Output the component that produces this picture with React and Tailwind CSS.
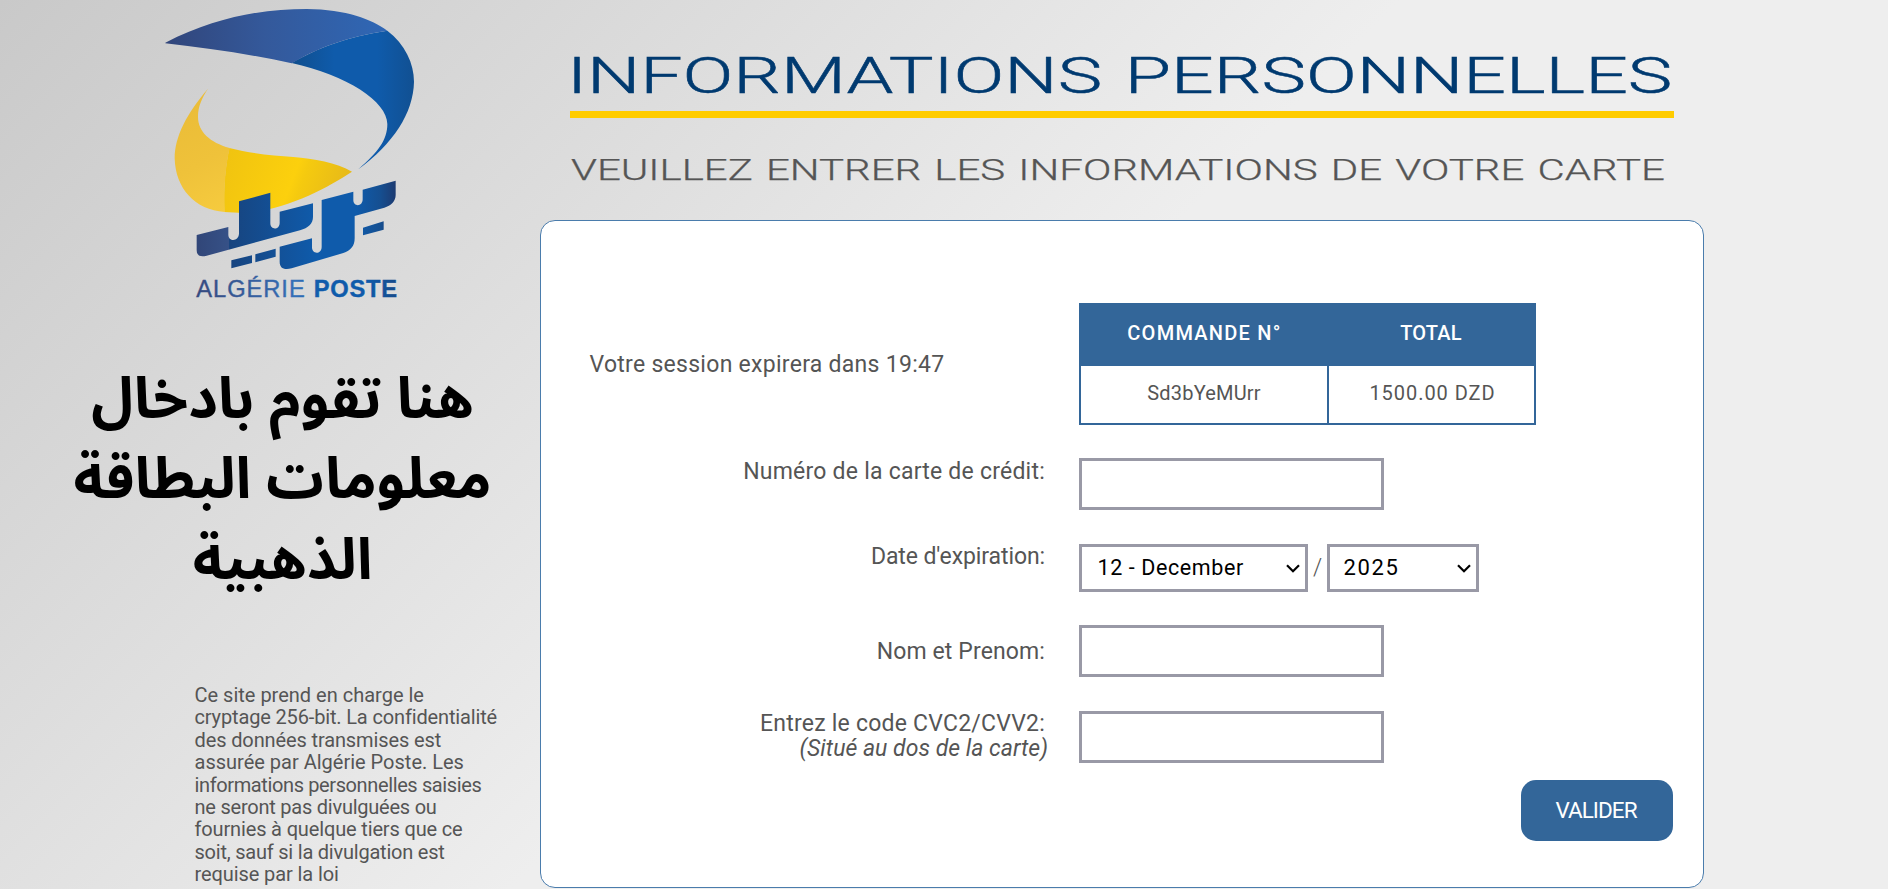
import React from 'react';

function Logo() {
  return (
    <svg className="block h-[310px] w-[300px]" viewBox="0 0 900 930" role="img" aria-label="Algérie Poste">
      <defs>
        <linearGradient id="swoopDull" gradientUnits="userSpaceOnUse" x1="76" y1="0" x2="742" y2="0">
          <stop offset="0" stopColor="#31457a" />
          <stop offset="0.45" stopColor="#34599b" />
          <stop offset="1" stopColor="#2f67b5" />
        </linearGradient>
        <linearGradient id="swoopBright" gradientUnits="userSpaceOnUse" x1="455" y1="0" x2="822" y2="0">
          <stop offset="0" stopColor="#104e8d" />
          <stop offset="0.35" stopColor="#0f5bab" />
          <stop offset="0.7" stopColor="#0f5bab" />
          <stop offset="1" stopColor="#115092" />
        </linearGradient>
        <linearGradient id="goldMain" gradientUnits="userSpaceOnUse" x1="250" y1="470" x2="590" y2="600">
          <stop offset="0" stopColor="#f0c310" />
          <stop offset="0.6" stopColor="#fcd00d" />
          <stop offset="0.68" stopColor="#f5ca0f" />
          <stop offset="1" stopColor="#e8bb18" />
        </linearGradient>
        <linearGradient id="goldSide" gradientUnits="userSpaceOnUse" x1="110" y1="350" x2="260" y2="630">
          <stop offset="0" stopColor="#ebbd38" />
          <stop offset="0.5" stopColor="#efc23a" />
          <stop offset="1" stopColor="#f6cb3e" />
        </linearGradient>
        <linearGradient id="word" gradientUnits="userSpaceOnUse" x1="170" y1="0" x2="768" y2="0">
          <stop offset="0" stopColor="#314678" />
          <stop offset="0.16" stopColor="#365187" />
          <stop offset="0.165" stopColor="#17447f" />
          <stop offset="0.6" stopColor="#0f5bab" />
          <stop offset="0.8" stopColor="#0f5bab" />
          <stop offset="0.92" stopColor="#154f91" />
          <stop offset="1" stopColor="#1d3a70" />
        </linearGradient>
        <linearGradient id="name" gradientUnits="userSpaceOnUse" x1="170" y1="0" x2="768" y2="0">
          <stop offset="0" stopColor="#354a7f" />
          <stop offset="0.5" stopColor="#3470b8" />
          <stop offset="0.62" stopColor="#0f5bab" />
          <stop offset="0.85" stopColor="#0f5bab" />
          <stop offset="1" stopColor="#164c8c" />
        </linearGradient>
      </defs>
      <path fill="url(#swoopBright)" d="M455 189C530 145 620 110 742 92C795 132 822 190 822 245C820 340 760 430 655 508C715 455 742 420 742 372C742 305 620 225 455 189Z" />
      <path fill="url(#swoopDull)" d="M76 128C230 50 370 27 500 27C620 28 695 58 742 92C620 110 530 145 455 190C330 162 200 145 76 130Z" />
      <path fill="url(#goldMain)" d="M253 636C250 560 256 500 268 444C330 460 400 467 460 471C520 476 590 488 636 515C560 565 420 640 296 638Z" />
      <path fill="url(#goldSide)" d="M204 266C140 340 104 410 104 475C106 565 165 630 254 636C251 560 257 500 269 444C210 427 174 395 174 350C174 320 185 295 204 266Z" />
      <g fill="url(#word)">
        <path d="M170 705L265 681V704C265 726 297 726 297 700V604L391 578V670C391 691 419 691 419 668V635L519 610V650C519 672 505 683 480 691L200 767C178 772 170 765 170 750Z" />
        <path d="M274 781L336 766V789L274 805ZM346 763L407 746V770L346 787ZM669 683L731 664V689L669 706Z" />
        <path d="M419 740L516 715V742C516 764 545 764 545 740V600L640 575V600C640 621 668 621 668 598V569L767 542V585C767 604 753 617 733 623L644 648V715C644 738 632 752 610 759L455 805C430 811 419 803 419 785Z" />
      </g>
      <g fill="url(#name)" stroke="url(#name)" strokeWidth="1.2" fontFamily="'Liberation Sans', sans-serif" fontSize="71">
        <text x="169" y="892" textLength="325">ALGÉRIE</text>
        <text x="521" y="892" fontWeight="700" textLength="250">POSTE</text>
      </g>
    </svg>
  );
}

function Chevron() {
  return (
    <svg className="pointer-events-none absolute top-[20px] right-[8px] h-[9px] w-[14px]" viewBox="0 0 14 9" fill="none" stroke="#000" strokeWidth="2.2">
      <path d="M1 1.2L7 7.2L13 1.2" />
    </svg>
  );
}

function Select({ box, text, value }) {
  return (
    <div className={'relative h-12 ' + box}>
      <select
        className={'h-full w-full appearance-none border-[3px] border-[#9999a6] bg-white p-0 text-black ' + text}
        defaultValue={value}
      >
        <option>{value}</option>
      </select>
      <Chevron />
    </div>
  );
}

function Field({ height, center, input, children }) {
  return (
    <div className={'flex gap-[34px] ' + height}>
      <div className={'w-[504px] text-right whitespace-nowrap ' + (center ? 'self-center' : 'pt-[0.5px]')}>{children}</div>
      {input}
    </div>
  );
}

const TextInput = ({ label }) => (
  <input aria-label={label} className="h-[52px] w-[305px] border-[3px] border-[#9999a6] bg-white" />
);

export default function App() {
  return (
    <div className="flex h-[889px] w-full overflow-hidden bg-[linear-gradient(135deg,#c9c9c9_0,#eeeeee_990px)] font-['Roboto','Liberation_Sans',sans-serif] text-[#555555]">
      <aside className="w-[540px] shrink-0">
        <div className="pl-[140px]">
          <Logo />
        </div>
        <h2 dir="rtl" className="mt-[50px] ml-[57.5px] h-[242px] w-[450px] text-center font-['Noto_Sans_Arabic','Noto_Sans',sans-serif] text-[57.4px] leading-[80.4px] font-bold whitespace-nowrap text-black">
          هنا تقوم بادخال
          <br />
          معلومات البطاقة
          <br />
          الذهبية
        </h2>
        <p className="mt-[82px] ml-[194.5px] text-[20px] leading-[22.4px] whitespace-nowrap">
          <span className="block">Ce site prend en charge le</span>
          <span className="block tracking-[-0.15px]">cryptage 256-bit. La confidentialité</span>
          <span className="block tracking-[-0.12px]">des données transmises est</span>
          <span className="block">assurée par Algérie Poste. Les</span>
          <span className="block tracking-[-0.38px]">informations personnelles saisies</span>
          <span className="block tracking-[-0.23px]">ne seront pas divulguées ou</span>
          <span className="block tracking-[-0.15px]">fournies à quelque tiers que ce</span>
          <span className="block tracking-[-0.22px]">soit, sauf si la divulgation est</span>
          <span className="block tracking-[-0.1px]">requise par la loi</span>
        </p>
      </aside>

      <main className="w-[1164px] shrink-0">
        <header className="mx-[30px] h-[220px] whitespace-nowrap">
          <h1 className="h-[117.5px] border-b-[7px] border-[#ffcc00] pt-[46px] text-[50.6px] leading-[60px] font-light text-[#003a70] [-webkit-text-stroke:0.5px_#003a70]">
            <span className="-ml-[3px] inline-block origin-left scale-x-[1.483] [word-spacing:3px]">INFORMATIONS PERSONNELLES</span>
          </h1>
          <p className="pt-[34px] text-[28.8px] leading-[36px] font-light [-webkit-text-stroke:0.25px_#555555]">
            <span className="ml-[1px] inline-block origin-left scale-x-[1.457] [word-spacing:2px]">VEUILLEZ ENTRER LES INFORMATIONS DE VOTRE CARTE</span>
          </p>
        </header>

        <section className="h-[668px] rounded-[15px] border border-[#4a7cac] bg-white text-[23px] leading-[25px]">
          <div className="mt-[82px] flex h-[121.5px] items-center">
            <p className="w-[538px] pt-[2px] pl-[48.5px] tracking-[0.28px]">Votre session expirera dans 19:47</p>
            <table className="h-[121.5px] w-[457px] table-fixed border-collapse border-2 border-[#336699] text-center text-[20px]">
              <thead>
                <tr className="h-[61px] bg-[#336699] text-white">
                  <th className="w-[248px] pb-[2px] font-medium tracking-[1.25px]">COMMANDE N°</th>
                  <th className="pb-[2px] font-medium tracking-[0.2px]">TOTAL</th>
                </tr>
              </thead>
              <tbody>
                <tr>
                  <td className="border-2 border-[#336699] pb-[2px] tracking-[0.2px]">Sd3bYeMUrr</td>
                  <td className="border-2 border-[#336699] pb-[2px] pl-[2px] tracking-[0.95px]">1500.00 DZD</td>
                </tr>
              </tbody>
            </table>
          </div>

          <form className="mt-[33.5px] flex flex-col gap-[33.5px]">
            <Field height="h-[52px]" input={<TextInput label="carte" />}>
              <span className="tracking-[0.23px]">Numéro de la carte de crédit:</span>
            </Field>
            <Field
              height="h-12"
              input={
                <div className="flex items-center">
                  <Select box="w-[229px]" text="pl-[15.5px] text-[21.5px] tracking-[0.6px]" value="12 - December" />
                  <span className="w-[19px] text-center font-light">/</span>
                  <Select box="w-[152px]" text="pl-[13.5px] text-[22px] tracking-[1.6px]" value="2025" />
                </div>
              }
            >
              <span className="tracking-[-0.1px]">Date d'expiration:</span>
            </Field>
            <Field height="h-[52px]" center input={<TextInput label="nom" />}>
              <span className="tracking-[0.12px]">Nom et Prenom:</span>
            </Field>
            <Field height="h-[52px]" input={<TextInput label="code" />}>
              <span className="block tracking-[0.23px]">Entrez le code CVC2/CVV2:</span>
              <em className="mr-[-3px] block tracking-[0.02px]">(Situé au dos de la carte)</em>
            </Field>
          </form>

          <div className="mt-[17px] mr-[30px] flex justify-end">
            <button className="h-[61px] w-[152px] rounded-[15px] bg-[#336699] pr-[2px] text-[22.5px] tracking-[-0.95px] text-white">VALIDER</button>
          </div>
        </section>
      </main>
    </div>
  );
}
